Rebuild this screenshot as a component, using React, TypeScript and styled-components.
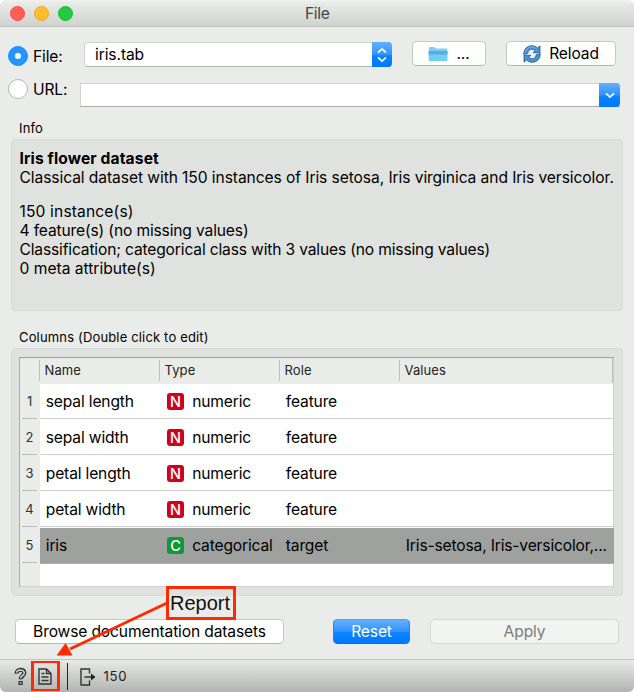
import React from "react";
import styled, { createGlobalStyle, css } from "styled-components";

const GlobalStyle = createGlobalStyle`
  * { box-sizing: border-box; }
  html, body { margin: 0; padding: 0; background: #fff; }
  body { font-family: Inter, "Liberation Sans", sans-serif; color: #000; }
`;

const Window = styled.div`
  position: relative;
  display: flex;
  flex-direction: column;
  width: 634px;
  height: 692px;
  overflow: hidden;
  border-radius: 6px;
  background: #eaece9;
  font-size: 15.6px;
  letter-spacing: -0.12px;
  white-space: nowrap;
`;

const TitleBar = styled.header`
  display: grid;
  grid-template-columns: 1fr auto 1fr;
  align-items: center;
  height: 27px;
  flex: none;
  padding: 0 9px 0 9.5px;
  border-bottom: 1px solid #c3c5c2;
  background: linear-gradient(#f1f3f1 0, #e8eae7 3px, #d0d2cf 26px);
  color: #444;
`;

const Lights = styled.div`
  display: flex;
  gap: 9px;
`;

const Light = styled.i<{ $fill: string; $edge: string }>`
  width: 15px;
  height: 15px;
  border-radius: 50%;
  background: ${(p) => p.$fill};
  border: 1px solid ${(p) => p.$edge};
`;

const Title = styled.span`
  padding-top: 1px;
  letter-spacing: -0.3px;
`;

const SourceRow = styled.div<{ $top: number }>`
  display: flex;
  align-items: flex-start;
  height: 26px;
  flex: none;
  margin-top: ${(p) => p.$top}px;
  padding-left: 8px;
`;

const RadioLabel = styled.label<{ $width: number; $drop?: number }>`
  display: flex;
  align-items: center;
  gap: 5px;
  width: ${(p) => p.$width}px;
  height: 20px;
  flex: none;
  margin-top: ${(p) => p.$drop ?? 0}px;
  letter-spacing: -0.15px;
`;

const Radio = styled.span<{ $on?: boolean }>`
  display: grid;
  place-items: center;
  width: 20px;
  height: 20px;
  flex: none;
  border-radius: 50%;
  border: 1px solid ${(p) => (p.$on ? "#1d8ffb" : "#b5b7b4")};
  background: ${(p) => (p.$on ? "#2494ff" : "#fff")};
  &::after {
    content: "";
    width: 6px;
    height: 6px;
    border-radius: 50%;
    background: #fff;
  }
`;

const blueFill = css`
  background: linear-gradient(#64b0ff, #2f93fb 50%, #0a84ff 55%, #0078ff);
`;

const ComboBox = styled.div`
  display: flex;
  align-items: stretch;
  justify-content: space-between;
  width: 308px;
  height: 25px;
  margin-top: 1px;
  padding-left: 10px;
  border: 1px solid #cfd1ce;
  border-bottom-color: #b4b6b3;
  border-right: 0;
  border-radius: 4px;
  background: #fff;
  line-height: 23px;
  letter-spacing: -0.1px;
`;

const UrlField = styled.div`
  display: flex;
  justify-content: flex-end;
  width: 540px;
  height: 24px;
  margin-top: 4px;
  border: 1px solid #cfd1ce;
  border-bottom-color: #a9aba8;
  border-right: 0;
  background: #fff;
`;

const Stepper = styled.span<{ $width: number }>`
  ${blueFill}
  display: grid;
  place-items: center;
  width: ${(p) => p.$width}px;
  margin: -1px 0;
  border-radius: 0 4px 4px 0;
`;

const Button = styled.button<{ $width: number; $left?: number; $kind?: "primary" | "disabled" }>`
  display: flex;
  align-items: center;
  justify-content: center;
  gap: 8px;
  width: ${(p) => p.$width}px;
  height: 25px;
  flex: none;
  margin: 0 0 0 ${(p) => p.$left ?? 0}px;
  padding: 0;
  border: 1px solid #c6c8c5;
  border-bottom-color: #b4b6b3;
  border-radius: 4.5px;
  background: #fff;
  color: #000;
  font: inherit;
  letter-spacing: -0.14px;
  ${(p) =>
    p.$kind === "primary" &&
    css`
      ${blueFill}
      border-color: #4ba1f8 #1a83f5 #0a6fe8;
      color: #fff;
    `}
  ${(p) =>
    p.$kind === "disabled" &&
    css`
      background: #f2f4f2;
      border-color: #d5d7d4;
      color: #7b7d7a;
    `}
`;

const GroupLabel = styled.div<{ $top: number }>`
  height: 20px;
  flex: none;
  margin: ${(p) => p.$top}px 0 1px 19px;
  line-height: 20px;
  font-size: 13px;
  letter-spacing: 0.16px;
`;

const Panel = styled.section<{ $height: number; $pad: string }>`
  width: 612px;
  height: ${(p) => p.$height}px;
  flex: none;
  margin-left: 11px;
  padding: ${(p) => p.$pad};
  border: 1px solid #d7d9d6;
  border-radius: 4px;
  background: #e0e2df;
`;

const InfoLine = styled.p<{ $bold?: boolean; $gap?: boolean; $track: number }>`
  height: 19.2px;
  margin: ${(p) => (p.$gap ? 14.4 : 0)}px 0 0;
  line-height: 19.2px;
  font-weight: ${(p) => (p.$bold ? 700 : 400)};
  letter-spacing: ${(p) => p.$track}px;
`;

const Table = styled.div`
  display: flex;
  flex-direction: column;
  width: 595px;
  height: 230px;
  border: 1px solid #d0d2cf;
  border-top-color: #a0a29f;
  border-left-color: #a9aba8;
  background: linear-gradient(90deg, #eaece9 20px, #fff 20px);
`;

const HeaderRow = styled.div`
  display: grid;
  grid-template-columns: 19px 120px 120px 120px 214px;
  height: 26px;
  flex: none;
  background: #eaece9;
`;

const HeaderCell = styled.div<{ $last?: boolean }>`
  height: 25px;
  padding-left: 5.5px;
  background: linear-gradient(#bcbebb, #bcbebb) 0 2px / 1px 21px no-repeat;
  border-right: ${(p) => (p.$last ? "1px solid #bcbebb" : "0")};
  font-size: 13px;
  line-height: 25px;
  letter-spacing: 0.1px;
  color: #222;
`;

const Row = styled.div<{ $first?: boolean }>`
  display: grid;
  grid-template-columns: 20px 1fr;
  height: ${(p) => (p.$first ? 35 : 36)}px;
  flex: none;
`;

const RowNumber = styled.div`
  display: flex;
  align-items: center;
  justify-content: center;
  margin: 0 3px 0 2px;
  border-bottom: 1px solid #b9bbb8;
  font-size: 13px;
  color: #333;
`;

const Cells = styled.div<{ $selected?: boolean; $drop: number }>`
  display: grid;
  grid-template-columns: 120px 120px 120px 1fr;
  align-items: center;
  padding: ${(p) => p.$drop}px 0 0 5.8px;
  border-bottom: 1px solid #cbcdca;
  letter-spacing: -0.16px;
  ${(p) =>
    p.$selected &&
    css`
      margin: 1px -1px -1px 0;
      padding-bottom: 1px;
      border-bottom-color: #adafac;
      background: #9fa19e;
    `}
`;

const TypeCell = styled.span`
  display: flex;
  align-items: center;
  gap: 8.2px;
  padding-left: 1.2px;
`;

const TypeBadge = styled.i<{ $green?: boolean }>`
  width: 17px;
  height: 17px;
  border-radius: 3px;
  background: ${(p) => (p.$green ? "#0f9a3a" : "#d0021b")};
  color: #fff;
  font: 500 14.5px/17px Inter, sans-serif;
  letter-spacing: 0;
  text-align: center;
`;

const Actions = styled.div`
  display: flex;
  flex: none;
  margin-top: 23px;
  padding-left: 15px;
`;

const StatusBar = styled.footer`
  display: flex;
  align-items: flex-start;
  height: 33px;
  margin-top: auto;
  padding: 3px 0 0 14px;
  border-top: 1px solid #c1c3c0;
  background: linear-gradient(#e8eae7, #b2b4b1);
`;

const StatusIcon = styled.span<{ $drop: number }>`
  display: flex;
  margin-top: ${(p) => p.$drop}px;
`;

const Divider = styled.i`
  width: 1px;
  height: 27px;
  margin: 0 12px 0 7px;
  background: #222;
`;

const StatusCount = styled.span`
  margin-left: 7.5px;
  font-size: 13.2px;
  line-height: 27px;
  letter-spacing: 0.7px;
  color: #222;
`;

const ReportButton = styled.span`
  display: grid;
  place-items: center;
  width: 29px;
  height: 30px;
  margin: -2px 0 0 4px;
  padding-right: 1px;
  border: 3px solid #ff2a00;
  border-width: 2.6px 3px;
`;

const Callout = styled.div`
  position: absolute;
  left: 166px;
  top: 586px;
  width: 70px;
  height: 34px;
  padding-right: 2px;
  border: 3px solid #ff2a00;
  background: linear-gradient(#e0e2df 7px, #eaece9 7px);
  font: 20px/29px "Liberation Sans", sans-serif;
  letter-spacing: 0;
  text-align: center;
  color: #111;
`;

const CalloutArrow = styled.svg`
  position: absolute;
  left: 50px;
  top: 596px;
`;

const FolderIcon = () => (
  <svg width="20" height="16" viewBox="0 0 20 16">
    <path d="M1 2.200Q1 1 2.200 1H6l1.500 1.400h11Q19.300 2.400 19.300 3.400V8H1z" fill="#7ccdf5" />
    <path d="M.5 5.300H19.500V14Q19.500 15 18.500 15H1.900Q.8 15 .8 14z" fill="#72cdf9" />
    <path d="M.5 5.100H19.500V8.600H.7z" fill="#56aedb" />
  </svg>
);

const ReloadIcon = () => (
  <svg width="18" height="18" viewBox="0 0 18 18">
    <circle cx="9" cy="9" r="6" fill="#eef3f7" />
    <g fill="#4393d8" stroke="#29567f" strokeWidth="0.8" strokeLinejoin="round">
      <path d="M.8 9.500C.4 4.300 4.200.7 8.800.7c2.300 0 4.100.8 5.500 2.200L17 .9V7.800H10.200l2-2.300C9.100 3.100 5.200 4.300 4.800 8.200z" />
      <path d="M17.200 8.500c.4 5.200-3.400 8.800-8 8.800-2.300 0-4.100-.8-5.500-2.200L1 17.100V10.200H7.800l-2 2.300c3.100 2.400 7 1.200 7.400-2.700z" />
    </g>
    <path d="M2.300 7.500C3 4 5.500 2.100 8.700 2.100c2.300 0 3.900.9 5 2.200" fill="none" stroke="#79b7ea" strokeWidth=".9" />
  </svg>
);

const UpDownIcon = () => (
  <svg width="12" height="18" viewBox="0 0 12 18" fill="none" stroke="#fff" strokeWidth="1.800">
    <path d="M2 6.600 6 2.900l4 3.700M2 11.400l4 3.700 4-3.700" />
  </svg>
);

const DownIcon = () => (
  <svg width="10" height="7" viewBox="0 0 10 7" fill="none" stroke="#fff" strokeWidth="1.800">
    <path d="M1 1.300 5 5.100l4-3.800" />
  </svg>
);

const HelpIcon = () => (
  <svg width="13" height="20" viewBox="0 0 13 20" fill="none">
    <path d="M2.600 6.700C2.400 1.600 10.500 1.500 10.300 5.900 10.200 8.600 6.600 8.700 6.600 12.200" stroke="#333" strokeWidth="4.200" />
    <path d="M4.500 15.900h4.200" stroke="#333" strokeWidth="4" />
    <path d="M2.600 5.700C3.200 2.200 10.400 2.200 10.300 5.900 10.200 8.600 6.600 8.700 6.600 11.300" stroke="#d4d6d3" strokeWidth="1.500" />
    <path d="M5.800 15.900h1.600" stroke="#d4d6d3" strokeWidth="1.500" />
  </svg>
);

const ReportIcon = () => (
  <svg width="14" height="17" viewBox="0 0 14 17" fill="none" stroke="#333" strokeWidth="1.400">
    <path d="M1 1h7.500L13 5.500V16H1z M8.500 1v4.500H13M3.500 5.500h3M3.500 9h7M3.500 12.500h7" />
  </svg>
);

const OutputIcon = () => (
  <svg width="16" height="18" viewBox="0 0 16 18">
    <path d="M9.500 5.500V1H1v16h8.500v-4.500M4.500 9h8" fill="none" stroke="#333" strokeWidth="1.400" />
    <path d="M11 5.600 15.500 9 11 12.400z" fill="#222" />
  </svg>
);

const columns = ["Name", "Type", "Role", "Values"];

const rows = [
  { name: "sepal length", type: "numeric", role: "feature", values: "" },
  { name: "sepal width", type: "numeric", role: "feature", values: "" },
  { name: "petal length", type: "numeric", role: "feature", values: "" },
  { name: "petal width", type: "numeric", role: "feature", values: "" },
  { name: "iris", type: "categorical", role: "target", values: "Iris-setosa, Iris-versicolor,..." },
];

export default function App() {
  return (
    <>
      <GlobalStyle />
      <Window>
        <TitleBar>
          <Lights>
            <Light $fill="#ff5f57" $edge="#f0504a" />
            <Light $fill="#ffbd2e" $edge="#eba827" />
            <Light $fill="#20cb42" $edge="#1bbb3a" />
          </Lights>
          <Title>File</Title>
          <span />
        </TitleBar>

        <SourceRow $top={14}>
          <RadioLabel $width={76} $drop={5}>
            <Radio $on /> File:
          </RadioLabel>
          <ComboBox>
            iris.tab
            <Stepper $width={20}>
              <UpDownIcon />
            </Stepper>
          </ComboBox>
          <Button $width={74} $left={20}>
            <FolderIcon /> ...
          </Button>
          <Button $width={110} $left={20}>
            <ReloadIcon /> Reload
          </Button>
        </SourceRow>

        <SourceRow $top={12}>
          <RadioLabel $width={72}>
            <Radio /> URL:
          </RadioLabel>
          <UrlField>
            <Stepper $width={21}>
              <DownIcon />
            </Stepper>
          </UrlField>
        </SourceRow>

        <GroupLabel $top={13}>Info</GroupLabel>
        <Panel $height={172} $pad="9px 0 0 7.500px">
          <InfoLine $bold $track={0.12}>Iris flower dataset</InfoLine>
          <InfoLine $track={-0.08}>
            Classical dataset with 150 instances of Iris setosa, Iris virginica and Iris versicolor.
          </InfoLine>
          <InfoLine $gap $track={0.14}>150 instance(s)</InfoLine>
          <InfoLine $track={-0.15}>4 feature(s) (no missing values)</InfoLine>
          <InfoLine $track={-0.16}>Classification; categorical class with 3 values (no missing values)</InfoLine>
          <InfoLine $track={0}>0 meta attribute(s)</InfoLine>
        </Panel>

        <GroupLabel $top={16}>Columns (Double click to edit)</GroupLabel>
        <Panel $height={248} $pad="8px 0 0 7px">
          <Table>
            <HeaderRow>
              <span />
              {columns.map((c) => (
                <HeaderCell key={c} $last={c === "Values"}>
                  {c}
                </HeaderCell>
              ))}
            </HeaderRow>
            {rows.map((r, i) => {
              const selected = i === rows.length - 1;
              return (
                <Row key={r.name} $first={i === 0}>
                  <RowNumber>{i + 1}</RowNumber>
                  <Cells $selected={selected} $drop={i > 0 && !selected ? 2 : 0}>
                    <span>{r.name}</span>
                    <TypeCell>
                      <TypeBadge $green={r.type === "categorical"}>{r.type[0].toUpperCase()}</TypeBadge>
                      {r.type}
                    </TypeCell>
                    <span>{r.role}</span>
                    <span>{r.values}</span>
                  </Cells>
                </Row>
              );
            })}
          </Table>
        </Panel>

        <Actions>
          <Button $width={269}>Browse documentation datasets</Button>
          <Button $width={77} $left={49} $kind="primary">
            Reset
          </Button>
          <Button $width={189} $left={20} $kind="disabled">
            Apply
          </Button>
        </Actions>

        <StatusBar>
          <StatusIcon $drop={4}>
            <HelpIcon />
          </StatusIcon>
          <ReportButton>
            <ReportIcon />
          </ReportButton>
          <Divider />
          <StatusIcon $drop={5}>
            <OutputIcon />
          </StatusIcon>
          <StatusCount>150</StatusCount>
        </StatusBar>

        <CalloutArrow width="120" height="64" viewBox="0 0 120 64">
          <path d="M117 7 20 53" stroke="#ff2a00" strokeWidth="3" />
          <path d="M6.500 59.600 15.600 47 22.500 59.600z" fill="#ff2a00" />
        </CalloutArrow>
        <Callout>Report</Callout>
      </Window>
    </>
  );
}
